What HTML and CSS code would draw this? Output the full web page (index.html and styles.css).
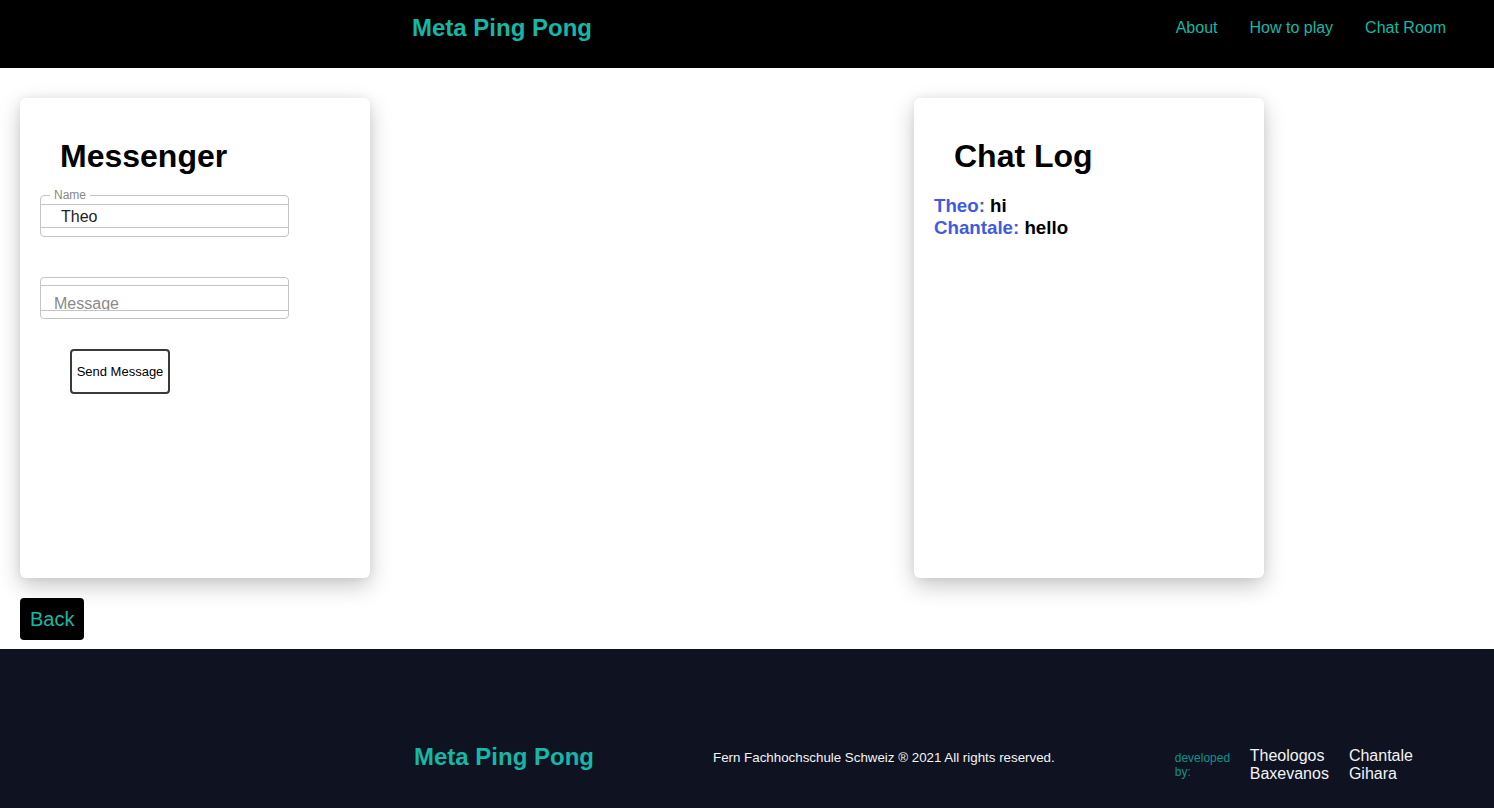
FILE: index.html
```html
<!DOCTYPE html>
<html lang="en">
<head>
<meta charset="utf-8">
<title>Meta Ping Pong - Chat Room</title>
<link rel="stylesheet" href="styles.css">
</head>
<body>
<header class="topbar">
  <div class="brand">Meta Ping Pong</div>
  <nav class="nav">
    <a href="#" class="nav-link">About</a>
    <a href="#" class="nav-link">How to play</a>
    <a href="#" class="nav-link">Chat Room</a>
  </nav>
</header>

<main class="main">
  <div class="cards">
    <section class="card">
      <h1 class="card-title">Messenger</h1>
      <fieldset class="field field-name">
        <legend class="field-legend">Name</legend>
        <input class="field-input input-name" type="text" value="Theo">
      </fieldset>
      <fieldset class="field field-message">
        <input class="field-input input-message" type="text" placeholder="Message">
      </fieldset>
      <button class="send-btn" type="button">Send Message</button>
    </section>

    <section class="card">
      <h1 class="card-title">Chat Log</h1>
      <div class="log">
        <div class="log-line"><span class="log-user">Theo:</span> hi</div>
        <div class="log-line"><span class="log-user">Chantale:</span> hello</div>
      </div>
    </section>
  </div>
  <button class="back-btn" type="button">Back</button>
</main>

<footer class="footer">
  <div class="footer-brand">Meta Ping Pong</div>
  <div class="footer-copy">Fern Fachhochschule Schweiz ® 2021 All rights reserved.</div>
  <div class="footer-dev">developed by:</div>
  <div class="footer-name">Theologos Baxevanos</div>
  <div class="footer-name">Chantale Gihara</div>
</footer>
</body>
</html>
```

FILE: styles.css
```css
* { box-sizing: border-box; }

html, body {
  margin: 0;
  padding: 0;
}

body {
  font-family: "Liberation Sans", Arial, sans-serif;
  background: #ffffff;
  color: #000;
}

.topbar {
  height: 68px;
  background: #000;
  display: flex;
  align-items: flex-start;
  padding: 0 48px 0 412px;
}

.brand {
  font-size: 24px;
  line-height: 28px;
  font-weight: 700;
  color: #14b8a6;
  margin-top: 14px;
}

.nav {
  margin-left: auto;
  display: flex;
  gap: 32px;
  margin-top: 19px;
}

.nav-link {
  font-size: 16px;
  line-height: 18px;
  color: #14b8a6;
  text-decoration: none;
}

.main {
  padding: 30px 20px 9px;
}

.cards {
  display: flex;
  gap: 544px;
}

.card {
  width: 350px;
  height: 480px;
  background: #fff;
  border-radius: 6px;
  box-shadow: 0 8px 22px rgba(0, 0, 0, 0.22), 0 0 8px rgba(0, 0, 0, 0.06);
  padding: 40px 20px 20px;
}

.card-title {
  margin: 0 0 13px;
  padding-left: 20px;
  font-size: 32px;
  line-height: 37px;
  font-weight: 700;
}

.field {
  width: 249px;
  margin: 0;
  padding: 0 0 8px;
  border: 1px solid #c4c4c4;
  border-radius: 4px;
  min-width: 0;
}

.field-legend {
  margin-left: 9px;
  padding: 0 4px;
  font-size: 12px;
  line-height: 14px;
  color: #888;
}

.field-name .field-input {
  margin-top: 2px;
}

.field-message {
  margin-top: 40px;
  padding-top: 7px;
  padding-bottom: 7px;
}

.field-input {
  display: block;
  width: 100%;
  margin: 0;
  border: 0;
  border-top: 1px solid #c4c4c4;
  border-bottom: 1px solid #c4c4c4;
  font-family: "Liberation Sans", Arial, sans-serif;
  font-size: 16px;
  line-height: 18px;
  color: #222;
  background: transparent;
  outline: none;
}

.input-name {
  height: 24px;
  padding: 1px 0 0 20px;
}

.input-message {
  height: 26px;
  padding: 12px 0 0 13px;
}

.input-message::placeholder {
  color: #8a8a8a;
}

.send-btn {
  display: block;
  margin: 30px 0 0 30px;
  width: 100px;
  height: 45px;
  padding: 0;
  background: #fff;
  border: 2px solid #3a3a3a;
  border-radius: 4px;
  font-family: "Liberation Sans", Arial, sans-serif;
  font-size: 13px;
  color: #000;
}

.log {
  margin-top: 20px;
}

.log-line {
  font-size: 18.72px;
  line-height: 21.6px;
  font-weight: 700;
  color: #000;
}

.log-user {
  color: #3f5be0;
}

.back-btn {
  display: flex;
  align-items: center;
  margin-top: 20px;
  height: 42px;
  padding: 0 10px;
  background: #000;
  border: 0;
  border-radius: 4px;
  font-family: "Liberation Sans", Arial, sans-serif;
  font-size: 20px;
  color: #14b8a6;
}

.footer {
  height: 159px;
  background: #0f1221;
  display: flex;
  align-items: flex-start;
  padding: 94px 0 0 414px;
}

.footer-brand {
  font-size: 24px;
  line-height: 28px;
  font-weight: 700;
  color: #14b8a6;
}

.footer-copy {
  margin: 7px 0 0 119px;
  font-size: 13.333px;
  line-height: 15px;
  color: #f3f4f6;
}

.footer-dev {
  margin: 8px 0 0 120px;
  width: 60px;
  font-size: 12px;
  line-height: 14px;
  color: #0d9488;
}

.footer-name {
  margin: 4px 0 0 15px;
  width: min-content;
  font-size: 16px;
  line-height: 18px;
  color: #f3f4f6;
}

.footer-name + .footer-name {
  margin-left: 20px;
}
```
